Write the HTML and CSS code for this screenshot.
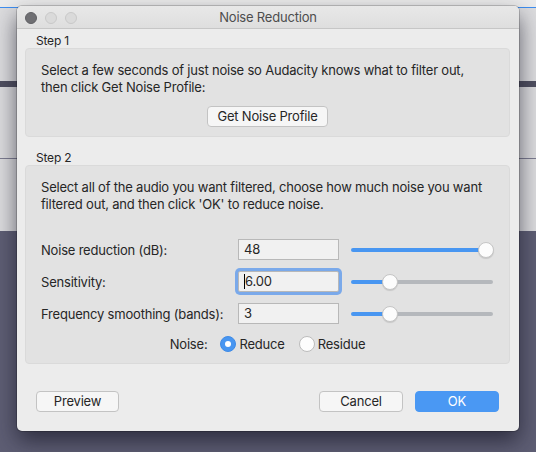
FILE: index.html
```html
<!DOCTYPE html>
<html>
<head>
<meta charset="utf-8">
<link rel="stylesheet" href="styles.css">
</head>
<body>
<div class="desktop">
  <div class="bg-top"></div>
  <div class="bg-blue"></div>
  <div class="bg-light a"></div>
  <div class="bg-dark-band"></div>
  <div class="bg-light b"></div>
  <div class="bg-line"></div>
  <div class="bg-light c"></div>
  <div class="bg-dark"></div>

  <div class="dialog">
    <div class="titlebar">
      <div class="lights">
        <span class="light close"></span>
        <span class="light"></span>
        <span class="light"></span>
      </div>
      <div class="title">Noise Reduction</div>
    </div>
    <div class="content">
      <div class="step-label">Step 1</div>
      <div class="group g1">
        <p class="desc">Select a few seconds of just noise so Audacity knows what to filter out,<br>then click Get Noise Profile:</p>
        <div class="center-row"><button class="btn">Get Noise Profile</button></div>
      </div>
      <div class="step-label s2">Step 2</div>
      <div class="group g2">
        <p class="desc">Select all of the audio you want filtered, choose how much noise you want<br>filtered out, and then click 'OK' to reduce noise.</p>
        <div class="rows">
          <div class="row">
            <span class="lbl">Noise reduction (dB):</span>
            <div class="field">48</div>
            <div class="slider"><div class="track" style="--p:1"></div><div class="thumb" style="--p:1"></div></div>
          </div>
          <div class="row">
            <span class="lbl">Sensitivity:</span>
            <div class="field focus"><span class="caret"></span>6.00</div>
            <div class="slider"><div class="track" style="--p:0.25"></div><div class="thumb" style="--p:0.25"></div></div>
          </div>
          <div class="row">
            <span class="lbl">Frequency smoothing (bands):</span>
            <div class="field">3</div>
            <div class="slider"><div class="track" style="--p:0.25"></div><div class="thumb" style="--p:0.25"></div></div>
          </div>
        </div>
        <div class="noise-row">
          <span class="noise-lbl">Noise:</span>
          <span class="radio on"></span><span class="rlbl">Reduce</span>
          <span class="radio"></span><span class="rlbl">Residue</span>
        </div>
      </div>
      <div class="buttons">
        <button class="btn b-prev">Preview</button>
        <div class="spacer"></div>
        <button class="btn b-cancel">Cancel</button>
        <button class="btn b-ok">OK</button>
      </div>
    </div>
  </div>
</div>
</body>
</html>
```
FILE: styles.css
```css
* { box-sizing: border-box; }
html, body { margin: 0; padding: 0; }
body {
  width: 536px; height: 452px; overflow: hidden;
  font-family: Inter, "Liberation Sans", sans-serif;
  font-size: 13px; color: #262626; letter-spacing: -0.2px;
}
.desktop { position: relative; width: 536px; height: 452px; background: #e6e6e6; }
.bg-top { height: 7px; background: #ebebeb; }
.bg-blue { height: 1px; background: #3e8ef0; }
.bg-light { background: #dcdcde; }
.bg-light.a { height: 73px; }
.bg-dark-band { height: 6px; background: #4f4f60; }
.bg-light.b { height: 71px; }
.bg-line { height: 1px; background: #7c7c90; }
.bg-light.c { height: 72px; }
.bg-dark { height: 221px; background: #5e5e74; }

.dialog {
  position: absolute; left: 17px; top: 6px; width: 502px; height: 425px;
  background: #ececec; border-radius: 5px;
  box-shadow: 0 0 0 1px rgba(0,0,0,0.18), 0 10px 22px rgba(20,20,35,0.65);
  display: flex; flex-direction: column; overflow: hidden;
}
.titlebar {
  position: relative; height: 23px; flex: none;
  background: linear-gradient(#e8e8e8, #dedede);
  border-bottom: 1px solid #c6c6c6;
  display: flex; align-items: center; justify-content: center;
}
.lights { position: absolute; left: 8px; top: 6px; display: flex; gap: 8px; }
.light { width: 12px; height: 12px; border-radius: 50%; background: #dadada; border: 1px solid #c9c9c9; }
.light.close { background: #6f6f73; border-color: #606064; }
.title { color: #4d4d4d; font-size: 13px; line-height: 16px; }

.content { padding: 4px 9px 0 8px; display: flex; flex-direction: column; flex: 1; }
.step-label { font-size: 12px; line-height: 15px; padding-left: 11px; height: 15px; }
.step-label.s2 { margin-top: 13px; }
.group {
  background: #e2e2e2; border: 1px solid #dadada; border-radius: 4px;
  padding: 0 15px;
}
.g1 { height: 89px; padding-top: 13px; }
.g2 { height: 199px; padding-top: 13px; }
.desc { margin: 0; line-height: 17px; white-space: nowrap; }
.center-row { display: flex; justify-content: center; margin-top: 10px; }
.btn {
  font-family: inherit; font-size: 13px; color: #262626; letter-spacing: inherit;
  height: 21px; padding: 0 9px; line-height: 19px;
  background: #f6f6f6; border: 1px solid #c3c3c3; border-radius: 4px;
}
.rows { margin-top: 26px; display: flex; flex-direction: column; gap: 11px; }
.row { display: flex; align-items: center; height: 21px; }
.lbl { width: 197px; flex: none; }
.field {
  position: relative; width: 101px; height: 21px; flex: none;
  background: #f1f1f1; border: 1px solid #b8b8b8; padding: 0 5px; line-height: 19px;
}
.field.focus { box-shadow: 0 0 0 3px #7aa9ea; border-radius: 2px; }
.caret { display: inline-block; width: 1px; height: 15px; background: #000; vertical-align: -3px; }
.slider { position: relative; width: 146px; height: 16px; margin-left: 11px; }
.track {
  position: absolute; left: 1px; right: 1px; top: 6px; height: 4px; border-radius: 2px;
  background: linear-gradient(to right, #4896f1 0, #4896f1 calc(7px + (100% - 14px) * var(--p)), #b5b8bc 0);
}
.thumb {
  position: absolute; top: 0; width: 16px; height: 16px; border-radius: 50%;
  left: calc((100% - 16px) * var(--p));
  background: #fcfcfc; border: 1px solid #c5c5c5;
  box-shadow: 0 1px 1px rgba(0,0,0,0.12);
}
.noise-row { margin-top: 12px; display: flex; align-items: center; justify-content: center; height: 16px; }
.noise-lbl { margin-right: 13px; }
.radio { width: 16px; height: 16px; border-radius: 50%; background: #fdfdfd; border: 1px solid #bcbcbc; margin-right: 3px; }
.radio.on { background: #4896f1; border-color: #3f8be6; position: relative; }
.radio.on::after { content: ""; position: absolute; left: 4px; top: 4px; width: 6px; height: 6px; border-radius: 50%; background: #fff; }
.rlbl { margin-right: 14px; }
.rlbl:last-child { margin-right: 0; }

.buttons { display: flex; margin-top: 27px; padding: 0 11px 0 11px; }
.spacer { flex: 1; }
.b-prev { width: 83px; }
.b-cancel { width: 84px; margin-right: 12px; }
.b-ok { width: 84px; background: #4a98f3; border-color: #4a98f3; color: #fff; }
```
